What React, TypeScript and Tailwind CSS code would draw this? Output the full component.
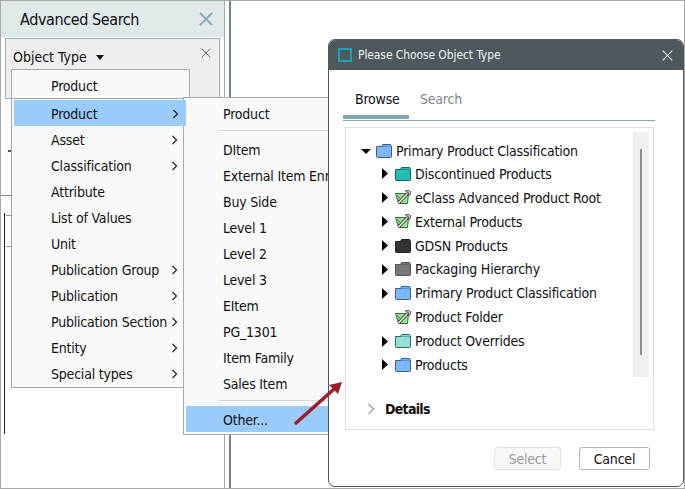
import type { ReactNode } from "react";

const folder = (fill: string, stroke: string) => (
  <svg width="16" height="14" viewBox="0 0 16 14" className="shrink-0">
    <path d="M0.5 2.5H15.5V12.5A1 1 0 0 1 14.5 13.5H1.5A1 1 0 0 1 0.5 12.5Z" fill={fill} stroke={stroke} />
    <path d="M5.5 2.5L6.5 0.5H14.5L15.5 2.5" fill={fill} stroke={stroke} />
  </svg>
);

const wand = (
  <svg width="16" height="15" viewBox="0 0 16 15" className="shrink-0">
    <path d="M0.5 3.5H13.5L12.5 13.5H3.5Z" fill="#8fe884" stroke="#48604a" />
    <path d="M2 5.5L5 8M2.5 9L4.5 11" stroke="#48604a" strokeWidth="1" />
    <path d="M3.5 13L12.5 3.5" stroke="#2f2f2f" strokeWidth="3.2" />
    <path d="M3.5 13L12.5 3.5" stroke="#fff" strokeWidth="1.4" />
    <path d="M10.5 1L13 0.5L15.5 1.5L15 5L12.5 5.5L14 3L12 2Z" fill="#fff" stroke="#333" strokeWidth="0.9" />
  </svg>
);

const Caret = ({ open = false, hidden = false }: { open?: boolean; hidden?: boolean }) => (
  <svg width={open ? 10 : 9} height="11" viewBox={open ? "0 0 10 11" : "0 0 9 11"} className={`shrink-0 ${hidden ? "invisible" : ""}`}>
    {open ? <path d="M0 3H10L5 8Z" fill="#000" /> : <path d="M1 0L7 5.5L1 11Z" fill="#000" />}
  </svg>
);

const Chevron = () => (
  <svg width="7" height="10" viewBox="0 0 7 10" className="shrink-0">
    <path d="M1.5 1L5.5 5L1.5 9" fill="none" stroke="#222" strokeWidth="1.2" />
  </svg>
);

const CloseX = ({ size, color, width }: { size: number; color: string; width: number }) => (
  <svg width={size} height={size} viewBox="0 0 16 16" className="shrink-0">
    <path d="M1 1L15 15M15 1L1 15" stroke={color} strokeWidth={width} fill="none" />
  </svg>
);

const mainItems: [string, boolean][] = [
  ["Asset", true],
  ["Classification", true],
  ["Attribute", false],
  ["List of Values", false],
  ["Unit", false],
  ["Publication Group", true],
  ["Publication", true],
  ["Publication Section", true],
  ["Entity", true],
  ["Special types", true],
];

const subItems = ["DItem", "External Item Enrichment", "Buy Side", "Level 1", "Level 2", "Level 3", "EItem", "PG_1301", "Item Family", "Sales Item"];

const tree: [string, ReactNode, boolean][] = [
  ["Discontinued Products", folder("#25bdb5", "#16615e"), true],
  ["eClass Advanced Product Root", wand, true],
  ["External Products", wand, true],
  ["GDSN Products", folder("#333333", "#222222"), true],
  ["Packaging Hierarchy", folder("#777777", "#555555"), true],
  ["Primary Product Classification", folder("#7db8ff", "#3e5f86"), true],
  ["Product Folder", wand, false],
  ["Product Overrides", folder("#96dfd8", "#22706a"), true],
  ["Products", folder("#7db8ff", "#3e5f86"), true],
];

export default function App() {
  return (
    <div className="relative h-[489px] w-[685px] overflow-hidden border border-[#a9a9a9] bg-white text-[14px] leading-[18px] tracking-[-0.2px] text-[#111] [font-family:'DejaVu_Sans_Condensed','DejaVu_Sans',sans-serif] [font-stretch:condensed]">
      {/* Background panel */}
      <div className="h-full w-[230px] border-r-2 border-r-[#808080]">
        <div className="h-full w-[224px] border-r border-r-[#8fb0b8]">
          <div className="flex h-[36px] items-center justify-between bg-[#e0e8ea] pl-[19px] pr-[11px]">
            <span className="pt-[2px] text-[16px] tracking-[-0.4px]">Advanced Search</span>
            <CloseX size={14} color="#84a9b2" width={2.2} />
          </div>
          <div className="mx-[4px] mt-[1px] flex h-[61px] items-start justify-between border border-[#8fb0b8] bg-[#eeeeee] pl-[7px] pr-[8px] pt-[8px]">
            <span className="flex h-[20px] items-center gap-[9px] tracking-normal">
              Object Type
              <svg width="8" height="5" viewBox="0 0 8 5"><path d="M0 0H8L4 5Z" fill="#111" /></svg>
            </span>
            <span className="mt-[1px]"><CloseX size={10} color="#666" width={1.6} /></span>
          </div>
          <div className="ml-[7px] mt-[51px] h-[2px] w-[3px] bg-[#555]" />
          <div className="mt-[43px] h-px w-[13px] bg-[#888]" />
          <div className="ml-[3px] mt-[17px] flex h-[221px]">
            <div className="w-px bg-[#222]" />
            <div className="ml-[1px] pt-[2px]">
              <div className="h-px w-[5px] bg-[#999]" />
              <div className="mt-[30px] h-px w-[5px] bg-[#999]" />
            </div>
          </div>
        </div>
      </div>

      {/* Combo box */}
      <div className="absolute left-[10px] top-[68px] h-[31px] w-[179px] border border-[#a9a9a9] bg-[#f9f9f9] pl-[39px] pt-[7px]">Product</div>

      {/* Sub menu */}
      <div className="absolute left-[182px] top-[96px] z-10 w-[190px] border border-[#a9a9a9] bg-[#f9f9f9] pb-[2px] pt-[3px]">
        <div className="flex h-[26px] items-center pl-[39px]">Product</div>
        <div className="mb-[6px] ml-[34px] mt-[3px] h-px bg-[#d9d9d9]" />
        {subItems.map((label) => (
          <div key={label} className="flex h-[26px] items-center whitespace-nowrap pl-[39px]">{label}</div>
        ))}
        <div className="mb-[5px] ml-[34px] mt-[3px] h-px bg-[#d9d9d9]" />
        <div className="ml-[2px] flex h-[26px] items-center bg-[#99ccfb] pl-[37px] pt-[2px]">Other...</div>
      </div>

      {/* Main menu */}
      <div className="absolute left-[10px] top-[97px] z-[11] w-[173px] border border-[#a9a9a9] bg-[#f9f9f9] pb-[1px] pt-[1px]">
        <div className="relative ml-[2px] flex h-[26px] w-[172px] items-center justify-between bg-[#99ccfb] pl-[37px] pr-[7px] pt-[2px]">
          Product
          <Chevron />
        </div>
        {mainItems.map(([label, arrow]) => (
          <div key={label} className="flex h-[26px] items-center justify-between whitespace-nowrap pl-[39px] pr-[5px] pt-[2px]">
            <span>{label}</span>
            {arrow && <Chevron />}
          </div>
        ))}
      </div>

      {/* Dialog */}
      <div className="absolute left-[327px] top-[38px] z-20 h-[448px] w-[356px] overflow-hidden rounded-[7px] border border-[#4f585c] bg-white">
        <div className="flex h-[30px] items-center justify-between bg-[#4f585c] pl-[9px] pr-[10px]">
          <div className="flex items-center gap-[6px] text-[12px] tracking-[-0.1px] text-[#eef2f3]">
            <span className="h-[14px] w-[14px] border-2 border-[#11a5bd]" />
            Please Choose Object Type
          </div>
          <CloseX size={11} color="#f2f2f2" width={1.5} />
        </div>
        <div className="ml-[14px] mr-[28px] mt-[15px] flex h-[36px] items-start border-b border-b-[#85a9b2]">
          <div className="h-[34px] w-[66px] border-b-[4px] border-b-[#85a9b2] pl-[12px] pt-[5px]">Browse</div>
          <div className="pl-[11px] pt-[5px] text-[#7f868a]">Search</div>
        </div>
        <div className="relative ml-[16px] mr-[29px] mt-[6px] h-[303px] border border-[#dcdcdc]">
          <div className="absolute right-[4px] top-[4px] flex h-[245px] w-[16px] justify-center bg-[#f0f0f0] pt-[17px]">
            <div className="h-[206px] w-[2px] bg-[#8e8e8e]" />
          </div>
          <div className="pl-[15px] pt-[13px]">
            <div className="flex h-[20px] items-center">
              <span className="mr-[5px] flex"><Caret open /></span>
              <span className="mr-[4px] flex">{folder("#7db8ff", "#3e5f86")}</span>
              Primary Product Classification
            </div>
            <div className="-mt-px">
              {tree.map(([label, icon, arrow]) => (
                <div key={label} className="ml-[20px] mt-[3.875px] flex h-[20px] items-center">
                  <span className="mr-[5px] flex"><Caret hidden={!arrow} /></span>
                  <span className="mr-[4px] flex">{icon}</span>
                  {label}
                </div>
              ))}
            </div>
          </div>
          <div className="absolute left-[21px] top-[271px] flex h-[20px] items-center gap-[10px] font-bold tracking-[-0.7px]">
            <svg width="8" height="12" viewBox="0 0 8 12"><path d="M1.5 1L6.5 6L1.5 11" fill="none" stroke="#a8a8a8" strokeWidth="1.6" /></svg>
            Details
          </div>
        </div>
        <div className="mr-[33px] mt-[17px] flex justify-end gap-[18px]">
          <div className="flex h-[23px] w-[67px] items-center justify-center rounded-[3px] border border-[#e2e2e2] bg-[#f7f7f7] text-[#9a9a9a]">Select</div>
          <div className="flex h-[23px] w-[71px] items-center justify-center rounded-[3px] border border-[#b5b5b5] bg-white">Cancel</div>
        </div>
      </div>

      {/* Annotation arrow */}
      <svg width="60" height="50" viewBox="0 0 60 50" className="absolute left-[289px] top-[377px] z-30">
        <path d="M6 45L43 12" stroke="#9e1b2a" strokeWidth="3.5" strokeLinecap="round" />
        <path d="M52 4L48 16L39 7Z" fill="#9e1b2a" />
      </svg>
    </div>
  );
}
